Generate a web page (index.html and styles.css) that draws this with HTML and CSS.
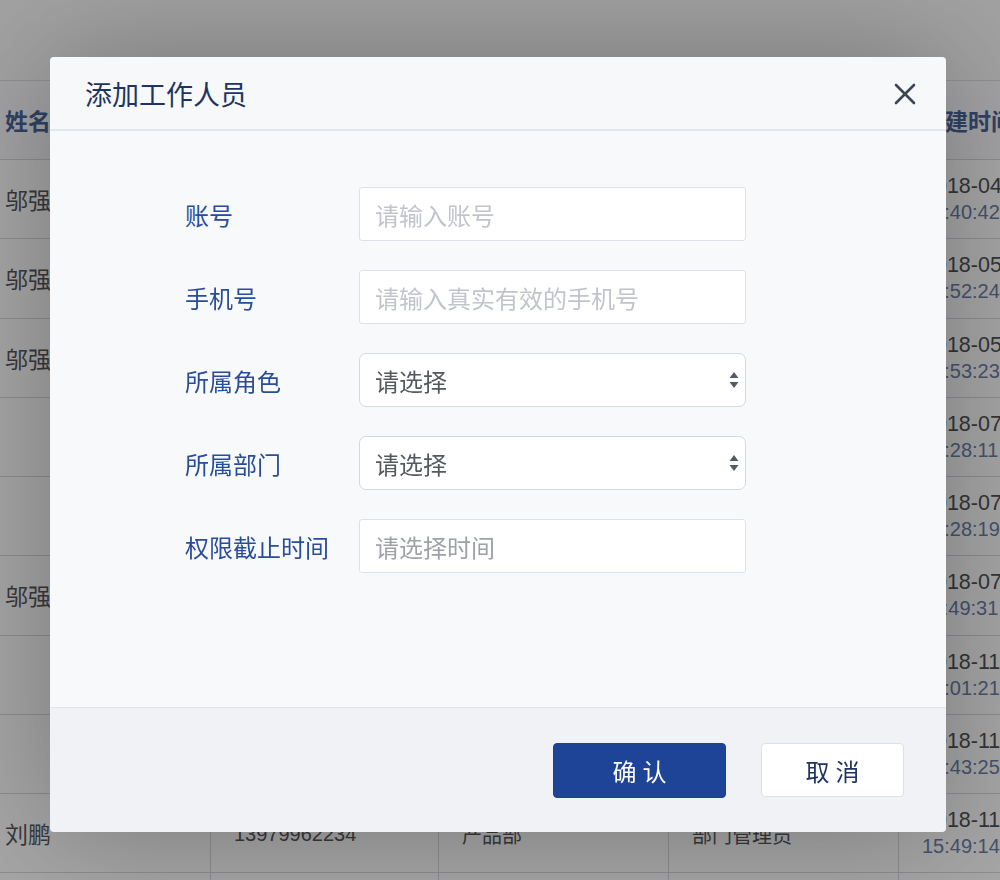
FILE: index.html
```html
<!DOCTYPE html>
<html lang="zh-CN">
<head>
<meta charset="utf-8">
<title>添加工作人员</title>
<link rel="stylesheet" href="styles.css">
</head>
<body>
<div class="page">
  <div class="topbar"></div>
  <div class="grid">
    <div class="row head">
      <div class="cell first">姓名</div>
      <div class="cell">手机号</div>
      <div class="cell">所属部门</div>
      <div class="cell">所属角色</div>
      <div class="cell">创建时间</div>
    </div>
    <div class="row">
      <div class="cell first">邬强</div>
      <div class="cell">13807915532</div>
      <div class="cell">产品部</div>
      <div class="cell">部门管理员</div>
      <div class="cell stamp"><span class="date">2018-04-12</span><span class="time">10:40:42</span></div>
    </div>
    <div class="row">
      <div class="cell first">邬强</div>
      <div class="cell">13807915532</div>
      <div class="cell">产品部</div>
      <div class="cell">部门管理员</div>
      <div class="cell stamp"><span class="date">2018-05-03</span><span class="time">14:52:24</span></div>
    </div>
    <div class="row">
      <div class="cell first">邬强</div>
      <div class="cell">13807915532</div>
      <div class="cell">产品部</div>
      <div class="cell">部门管理员</div>
      <div class="cell stamp"><span class="date">2018-05-03</span><span class="time">14:53:23</span></div>
    </div>
    <div class="row">
      <div class="cell first"></div>
      <div class="cell">13607912201</div>
      <div class="cell">运营部</div>
      <div class="cell">普通员工</div>
      <div class="cell stamp"><span class="date">2018-07-16</span><span class="time">09:28:11</span></div>
    </div>
    <div class="row">
      <div class="cell first"></div>
      <div class="cell">13607912202</div>
      <div class="cell">运营部</div>
      <div class="cell">普通员工</div>
      <div class="cell stamp"><span class="date">2018-07-16</span><span class="time">09:28:19</span></div>
    </div>
    <div class="row">
      <div class="cell first">邬强</div>
      <div class="cell">13807915532</div>
      <div class="cell">产品部</div>
      <div class="cell">部门管理员</div>
      <div class="cell stamp"><span class="date">2018-07-20</span><span class="time">11:49:31</span></div>
    </div>
    <div class="row">
      <div class="cell first"></div>
      <div class="cell">13907918870</div>
      <div class="cell">市场部</div>
      <div class="cell">普通员工</div>
      <div class="cell stamp"><span class="date">2018-11-02</span><span class="time">16:01:21</span></div>
    </div>
    <div class="row">
      <div class="cell first"></div>
      <div class="cell">13907918871</div>
      <div class="cell">市场部</div>
      <div class="cell">普通员工</div>
      <div class="cell stamp"><span class="date">2018-11-08</span><span class="time">10:43:25</span></div>
    </div>
    <div class="row">
      <div class="cell first">刘鹏</div>
      <div class="cell">13979962234</div>
      <div class="cell">产品部</div>
      <div class="cell">部门管理员</div>
      <div class="cell stamp"><span class="date">2018-11-26</span><span class="time">15:49:14</span></div>
    </div>
    <div class="row">
      <div class="cell first"></div>
      <div class="cell"></div>
      <div class="cell"></div>
      <div class="cell"></div>
      <div class="cell"></div>
    </div>
  </div>
</div>

<div class="overlay"></div>

<div class="modal">
  <div class="modal-header">
    <div class="modal-title">添加工作人员</div>
    <svg class="close" width="22" height="22" viewBox="0 0 22 22" aria-label="关闭">
      <path d="M2 2 L20 20 M20 2 L2 20" stroke="#3e4553" stroke-width="2.6" stroke-linecap="round" fill="none"/>
    </svg>
  </div>
  <div class="modal-body">
    <div class="form">
      <label class="label">账号</label>
      <input class="field" type="text" placeholder="请输入账号">
      <label class="label">手机号</label>
      <input class="field" type="text" placeholder="请输入真实有效的手机号">
      <label class="label">所属角色</label>
      <div class="field select">
        <span>请选择</span>
        <svg class="arrows" width="10" height="18" viewBox="0 0 10 18">
          <path d="M0.5 7 L5 1 L9.5 7 Z M0.5 11 L5 17 L9.5 11 Z" fill="#555a63"/>
        </svg>
      </div>
      <label class="label">所属部门</label>
      <div class="field select">
        <span>请选择</span>
        <svg class="arrows" width="10" height="18" viewBox="0 0 10 18">
          <path d="M0.5 7 L5 1 L9.5 7 Z M0.5 11 L5 17 L9.5 11 Z" fill="#555a63"/>
        </svg>
      </div>
      <label class="label">权限截止时间</label>
      <div class="field picker">请选择时间</div>
    </div>
  </div>
  <div class="modal-footer">
    <button class="btn primary" type="button">确认</button>
    <button class="btn plain" type="button">取消</button>
  </div>
</div>
</body>
</html>
```

FILE: styles.css
```css
html, body {
  margin: 0;
  padding: 0;
}

body {
  width: 1000px;
  height: 880px;
  overflow: hidden;
  background: #ffffff;
  font-family: "Noto Sans CJK SC", "Liberation Sans", sans-serif;
  position: relative;
}

.page {
  width: 1000px;
  height: 880px;
  overflow: hidden;
}

.topbar {
  height: 80px;
  background: #f6f6f6;
}

.grid {
  width: 1128px;
  border-top: 1px solid #d9dbe4;
}

.row {
  display: grid;
  grid-template-columns: 210px 228px 230px 230px 230px;
  height: 79.25px;
  box-sizing: border-box;
  border-bottom: 1px solid #d5d7e0;
  background: #fcfcfc;
}

.row.head {
  height: 79px;
  background: #f7f8fa;
}

.cell {
  border-left: 1px solid #d5d7e0;
  padding-left: 23px;
  display: flex;
  align-items: center;
  font-size: 20px;
  color: #55575b;
  font-family: "Liberation Sans", "Noto Sans CJK SC", sans-serif;
  padding-top: 3px;
}

.cell.first {
  border-left: none;
  padding-left: 5px;
  font-family: "Noto Sans CJK SC", sans-serif;
  font-size: 23px;
  padding-top: 0;
}

.row.head .cell {
  font-family: "Noto Sans CJK SC", sans-serif;
  font-weight: 700;
  font-size: 23px;
  color: #4a6599;
  padding-top: 0;
}

.cell.stamp {
  flex-direction: column;
  align-items: flex-start;
  justify-content: center;
  line-height: 26px;
  padding-left: 24px;
  padding-top: 0;
}

.date {
  font-size: 21.5px;
  color: #505154;
}

.time {
  font-size: 20px;
  color: #6b7fa6;
  margin-left: -1px;
}

.overlay {
  position: fixed;
  inset: 0;
  background: rgba(0, 0, 0, 0.34);
}

.modal {
  position: absolute;
  top: 57px;
  left: 50px;
  width: 896px;
  height: 775px;
  display: flex;
  flex-direction: column;
  border-radius: 4px;
  overflow: hidden;
  box-shadow: 0 0 120px rgba(0, 0, 0, 0.28);
}

.modal-header {
  box-sizing: border-box;
  height: 74px;
  flex: none;
  background: #f7f8fa;
  border-bottom: 2px solid #e2e6ee;
  display: flex;
  align-items: center;
  justify-content: space-between;
  padding: 0 30px 0 35px;
}

.modal-title {
  font-size: 27px;
  color: #1e3563;
  line-height: 1;
}

.close {
  display: block;
  margin-top: 2px;
}

.modal-body {
  box-sizing: border-box;
  height: 576px;
  flex: none;
  background: #f7f9fb;
  padding-top: 56px;
}

.form {
  display: grid;
  grid-template-columns: 174px 387px;
  grid-auto-rows: 54px;
  row-gap: 29px;
  padding-left: 135px;
}

.label {
  display: flex;
  align-items: center;
  font-size: 24px;
  color: #2a4d9b;
}

.field {
  box-sizing: border-box;
  width: 387px;
  height: 54px;
  margin: 0;
  padding: 0 0 0 15px;
  background: #ffffff;
  border: 1px solid #dde2ea;
  border-radius: 3px;
  font-family: "Noto Sans CJK SC", sans-serif;
  font-size: 24px;
  color: #55585e;
  outline: none;
}

.field::placeholder {
  color: #c1c4cb;
}

.select {
  display: flex;
  align-items: center;
  justify-content: space-between;
  padding-right: 6px;
  border: 1px solid #d3d8e1;
  border-radius: 7px;
  color: #55585e;
}

.arrows {
  display: block;
}

.picker {
  display: flex;
  align-items: center;
  color: #9ea1a7;
}

.modal-footer {
  box-sizing: border-box;
  height: 125px;
  flex: none;
  background: #f0f2f5;
  border-top: 1px solid #e1e4ea;
  display: flex;
  justify-content: flex-end;
  align-items: flex-start;
  gap: 35px;
  padding: 35px 42px 0 0;
}

.btn {
  box-sizing: border-box;
  height: 55px;
  margin: 0;
  border-radius: 4px;
  font-family: "Noto Sans CJK SC", sans-serif;
  font-size: 24px;
  letter-spacing: 6px;
  padding: 0 0 0 6px;
  cursor: pointer;
}

.btn.primary {
  width: 173px;
  background: #1e4497;
  border: 1px solid #1c4092;
  color: #ffffff;
}

.btn.plain {
  width: 143px;
  height: 54px;
  background: #ffffff;
  border: 1px solid #dce1e9;
  color: #1f3561;
}
```
